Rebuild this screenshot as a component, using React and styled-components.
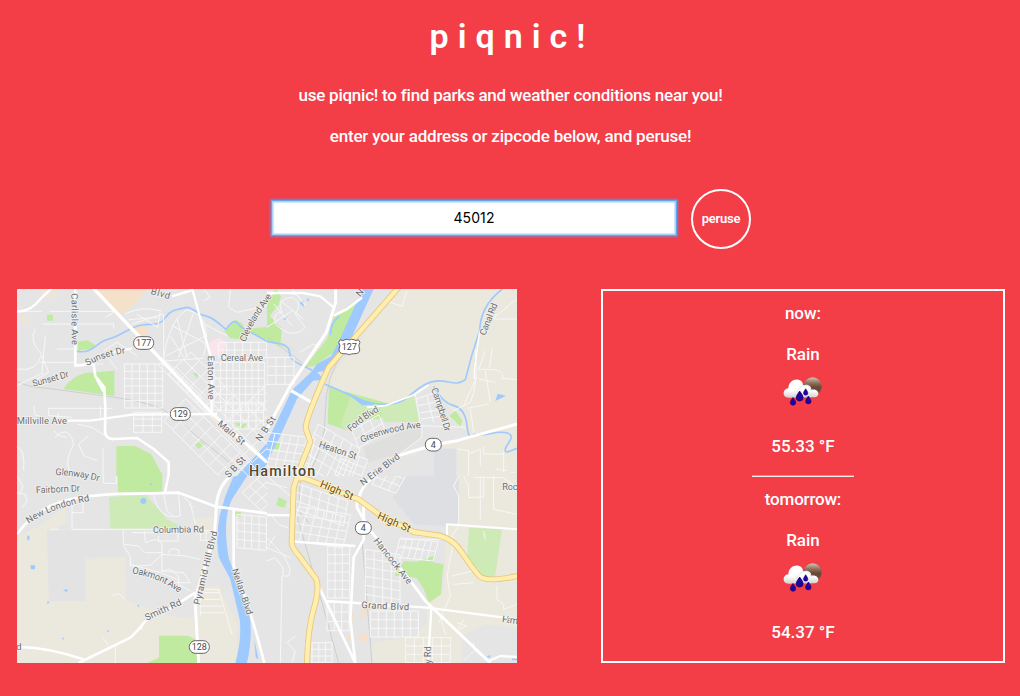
import React from "react";
import styled, { createGlobalStyle } from "styled-components";

const GlobalStyle = createGlobalStyle`
  * { box-sizing: border-box; }
  body {
    margin: 0;
    background: #f33d47;
    color: #fff;
    font-family: Roboto, "Liberation Sans", sans-serif;
  }
`;

const Page = styled.main`
  height: 696px;
  overflow: hidden;
  display: flex;
  flex-direction: column;
`;

const Header = styled.header`
  height: 189px;
  padding-top: 14px;
  display: flex;
  flex-direction: column;
  align-items: center;
`;

const Title = styled.h1`
  margin: 0 0 25px;
  height: 44px;
  font: 600 34px/44px Roboto, "Liberation Sans", sans-serif;
  letter-spacing: 9px;
  padding-left: 4px;
`;

const Text = styled.p`
  margin: 0;
  height: 24px;
  font-size: 17px;
  font-weight: 500;
  line-height: 24px;
  white-space: nowrap;
  letter-spacing: ${(p) => p.$spacing || 0}px;
`;

const Intro = styled(Text)`
  margin-bottom: 17px;
  padding-left: 1px;
`;

const SearchForm = styled.form`
  height: 100px;
  padding-left: 271px;
  display: flex;
  align-items: flex-start;
  gap: 14px;
`;

const AddressInput = styled.input`
  width: 406px;
  height: 36px;
  margin-top: 11px;
  padding: 0 0 2px;
  border: 1px solid #64a5ee;
  outline: 0;
  background: #fff;
  box-shadow: 0 0 2px 1px #8a7fbb, inset 0 0 1px 1.5px #a5cff9;
  color: #000;
  text-align: center;
  font: 400 14px Inter, sans-serif;
  letter-spacing: 0.1px;
`;

const PeruseButton = styled.button`
  width: 60px;
  height: 60px;
  padding: 0 0 1px;
  border: 2px solid #fff;
  border-radius: 50%;
  background: transparent;
  color: #fff;
  font: 600 13px Roboto, sans-serif;
  letter-spacing: -0.2px;
`;

const Results = styled.section`
  display: flex;
  justify-content: space-between;
  padding: 0 15px 0 17px;
`;

const MapFrame = styled.div`
  width: 500px;
  height: 374px;
  overflow: hidden;
  background: #e5e5e5;
  svg { display: block; }
`;

const WeatherPanel = styled.aside`
  width: 404px;
  height: 374px;
  border: 2px solid #fff;
  padding-top: 10px;
  display: flex;
  flex-direction: column;
  align-items: center;
`;

const Forecast = styled.article`
  flex: none;
  height: 186px;
  display: flex;
  flex-direction: column;
  align-items: center;
`;

const When = styled(Text)`
  margin-bottom: 17px;
`;

const IconBox = styled.div`
  height: 50px;
  padding-top: 11px;
  margin-bottom: 18px;
  svg { display: block; }
`;

const Divider = styled.hr`
  width: 102px;
  height: 2px;
  margin: 17px 0 0;
  border: 0;
  border-top: 1px solid #a6a2a4;
  border-bottom: 1px solid #f1eeee;
`;

/* Map drawing units are a third of a pixel; each tile covers 750 by 561 units. */
const tiles = [
  {
    at: [0, 0],
    land: [
      ["#f5e0c9", "M232 0L396 0L345 52L300 85Z M345 118L370 106L392 116L386 140L365 140Z M593 372L606 388L600 396L588 386Z M685 460l14 14l-12 8Z"],
      ["#ede6d8", "M70 0h52v20l-52 8Z M8 75l30 12v22l-26-8Z"],
      ["#fbe4ec", "M577 160L605 146L630 160L618 196L580 200Z"],
      ["#bfeaa0", "M90 77h18v18H90Z M183 158l28-4l24 14l-12 12l-40 5Z M140 300Q160 265 205 252L292 245V321L255 316Z M622 126l34-34l20 12l14 48l-50-4Z M700 118l50-4v42l-52-24Z M526 252h17v18Z M652 402l40 1l-18 20Z M534 467l16-12l13 11l-18 14Z M298 472L352 470L402 495L438 561H298Z"],
    ],
    water: ["M750 462L698 520L660 561H720L750 525Z"],
    streams: ["M180 187C230 195 235 160 275 150S340 112 375 108S430 110 445 86S480 62 510 55C530 55 540 78 570 82C600 90 625 125 628 120S650 85 663 104S700 125 750 158"],
    minor: [
      "M0 67H75M98 67H295L265 85M74 105H290V120M55 120Q35 155 70 190L95 250L50 275M0 240Q60 250 72 200M85 140L75 250M120 180H180M70 220H175M200 225L260 210M325 75Q370 50 430 65L422 115L360 75M335 92L420 85M345 105L438 75",
      "M440 210Q455 95 510 62Q590 80 560 200M448 200L568 140M465 110L570 165M480 88L510 205M530 70L485 205M500 205L460 140M440 216L560 208M560 105L630 140M560 0L580 25L560 35M640 0L635 55L660 70L750 50",
      "M95 358H285M95 358V380L165 385M125 372L120 400M250 350V385M110 425L125 440L150 445M180 405L225 415L265 440M115 445Q155 405 170 465Q140 520 160 548L235 555M215 440L185 465L200 500L240 515M258 478V561M50 350L55 380H68M0 475Q25 480 20 545",
      "M440 75V230M200 225L258 225M260 185L300 160L360 200M275 210L300 240M0 290L80 250"
    ],
    grids: [
      [322, 225, 23, 0, 0, 22, 5, 6], [350, 370, 28, 0, 0, 20, 3, 3], [443, 212, 28, 28, -18, 18, 5, 1],
      [455, 255, 26, 26, 22, -22, 6, 3], [440, 395, 27, 27, 22, -22, 8, 3],
      [591, 220, 19, 0, 0, 24, 8, 6], [625, 345, 23, 0, 0, 25, 5, 3], [605, 160, 24, 0, 0, 23, 6, 2],
      [610, 420, 25, -24, 24, 25, 6, 4]
    ],
    rail: ["M0 278Q35 293 62 295T270 322Q380 335 440 362L750 610"],
    major: [
      ["M220 -12L590 378L750 520", 10], ["M0 67Q40 70 70 30L110 -8", 7], ["M175 0V230L230 225L235 262L262 295L265 360L264 430Q268 452 290 450L360 447L410 480L455 520V561", 8],
      ["M526 0L584 215V375", 7], ["M150 395H220L345 377L600 375", 7], ["M465 22L530 2", 7], ["M290 190L345 178", 6], ["M240 268L262 308", 11]
    ], highways: []
  },
  {
    at: [750, 0],
    land: [
      ["#ebe8dd", "M400 0H750V561H570V478H448V500L410 500L610 440L545 375L500 290L400 350L300 345L180 288L205 245Z"],
      ["#e5e5e5", "M440 320L490 290L530 330L600 440L410 500L350 400H458Z"],
      ["#dedfe3", "M502 480H567V561H502Z"],
      ["#dfdfde", "M290 475L462 405V450L405 493L300 520Z"],
      ["#bfeaa0", "M0 20L28 0L42 22L35 48L8 80L45 120L40 165L90 184L0 158Z M278 24L200 85L180 150L112 235L145 230L200 190L285 30Z M186 294L370 345L340 390H305L240 424L182 404Z M547 380L566 365L586 395L580 412Z M15 465l26-9l-4 24l-20 1Z"],
      ["#ceebb7", "M250 325L220 410L240 424L305 385L345 350Z M338 354L440 319L458 398L350 400Z"],
    ],
    water: ["M288 0L255 70L215 158L192 202L150 225L132 250L75 303L-5 470V530L40 440L90 330L138 275L172 272L150 250L180 245L235 187L320 0Z", "M685 336l7-22l25 6Z M98 42l12-8v20Z M48 90l12-6l-4 10Z M118 32l8-4v10Z M235 308l55 25l35 14l-40 2Z"],
    streams: ["M0 158L45 165Q70 175 68 195T135 243", "M172 285C250 315 295 350 360 346S420 315 475 286S560 300 595 272Q612 200 638 125Q640 50 706 0", "M500 292Q525 340 560 350T600 410T622 436C650 445 690 422 720 432S720 460 715 480S740 480 750 478", "M217 82Q190 100 190 138"],
    minor: [
      "M0 18L52 10L90 18L115 48L75 0M45 70Q25 30 75 25Q110 40 85 75L115 115Q75 155 25 105Q15 70 45 70M98 190L140 165L155 175M20 45L75 110M40 35L110 90M0 115L75 65",
      "M370 40L405 52L420 5M655 185L635 242Q720 235 705 268L750 272M635 270L685 280M655 245L670 340M680 90H750M665 98L750 30M630 262L590 350M668 235L675 180M610 360L620 430M600 358L665 345",
      "M445 315L460 405M480 320L500 400M505 325L535 425M448 330L500 312M452 350L515 338M460 372L525 360M462 390L535 380M462 410L595 415M560 365L610 340Q635 290 625 180M400 493L465 445V410",
      "M570 480L605 485V561M605 495L640 480V530M650 470V495H710M710 485V550M685 540L720 545M745 550L730 550"
    ],
    grids: [[0, 205, 27, 0, 0, 27, 3, 3], [0, 430, 24, 3, -6, 25, 6, 5], [155, 405, 25, 15, -13, 29, 5, 5], [255, 425, 27, -16, 10, 26, 3, 2], [230, 485, 24, 9, -9, 24, 3, 3]],
    rail: ["M0 145L50 180L110 225L160 270M400 0L230 190Q175 260 175 370T120 561"],
    major: [["M206 0V40L178 130L70 290L0 420", 9], ["M0 12H108L160 22L200 55", 7], ["M200 80L240 60L285 25", 8], ["M72 305L138 342", 9], ["M300 355L355 350L440 318L485 288", 5], ["M395 500Q500 465 570 455L750 405", 9], ["M638 125L622 245V270", 4]],
    highways: ["M395 -5L185 235Q115 390 116 418L130 458L100 535"]
  },
  {
    at: [0, 561],
    land: [
      ["#ebe8dd", "M0 185L75 145L110 118L148 95V140L90 168L96 375H203L205 250L326 242V372L465 420L530 426L535 350L550 150L590 123V300L660 440V561H0Z M535 125h55v45l-55 10Z"],
      ["#e3e3e4", "M90 165H326V243H205V375H96Z"],
      ["#e5e5e5", "M320 160H590V123L602 250L606 325L552 340L530 426L465 420L326 372Z"],
      ["#ebe8dd", "M535 125h55v45l-55 10Z"],
      ["#bfeaa0", "M302 0H436V50H303Z M655 108h17v13H655Z M426 479H512L540 492V561H390L426 545Z"],
      ["#ceebb7", "M276 63L385 57L430 105L450 130L490 150L450 158H280Z"],
    ],
    water: ["M650 0L625 60L608 120Q595 200 606 245L640 310L668 430Q675 490 655 561H690Q710 470 695 405Q665 330 635 245Q615 130 645 70L690 0Z", "M370 75a9 9 0 1 1 18 0a9 9 0 1 1-18 0 M30 182l6-4l2 10l-6 7Z M40 268h14v12H42Z M138 343l12-4l2 10Z M90 376l8 1l-6 8Z M268 466l8-4v6Z M135 487l5-3v9Z M360 386h6v9Z M398 25l6-4v8Z M712 490l12 60l-8-6Z"],
    streams: [],
    minor: [
      "M0 50L25 55L30 75L15 95M0 0L18 30L10 55M165 80V160H410M165 110H198V75M100 160H125M260 0V22H298V0M318 162L320 210L340 240V270L400 268L435 235V200L415 190L385 200L382 165M322 205L365 210L382 230M345 170H420M425 180V195H483V170M385 230H435V285L500 290L520 320H475",
      "M435 235L505 240L550 250M455 232Q455 212 485 222V235M340 265L430 290L480 310M410 55Q425 135 490 120L485 55M440 55L450 105L470 120M500 65L520 80L535 145M515 85L530 95M430 285L460 280L485 300V325L520 345M550 350H605V340L552 340M605 340L645 475M550 370H610M550 390H615M550 410H620M550 345V420M285 358L305 353L325 370M258 485L275 510M295 510V561M375 450V462"
    ],
    grids: [[660, 115, 22, 2, 0, 25, 4, 4], [675, 50, 22, -20, 19, 18, 4, 3], [550, 164, 17, 0, 0, 29, 2, 1]], rail: [],
    major: [["M0 175Q50 105 130 78T400 52L485 50L598 92L750 112", 8], ["M455 -5L444 50", 7], ["M640 0Q600 35 598 95L592 180Q545 330 534 370L545 561", 9], ["M650 100V270Q695 380 742 561", 8], ["M535 350L455 400Q390 420 370 455L340 485L185 561", 8], ["M10 513Q95 515 200 550", 7]],
    highways: []
  },
  {
    at: [750, 561],
    land: [
      ["#ebe8dd", "M575 0H750V455L655 445L585 480V561H315V500L440 482L480 440V390L525 350L535 290L535 145L575 140Z"],
      ["#dedfe3", "M405 0H575V140L530 150L440 145L378 65Z"],
      ["#f5e0c9", "M245 410l15 2v25l-20-4Z M285 395l14 3l-2 22l-18 8Z M245 480l8-2l2 16h-12Z M275 472h28v22h-28Z"],
      ["#bfeaa0", "M412 256L450 257L500 239V260L529 264L522 355L485 380L470 338L448 305L405 300H385V288Z M35 64l25 12l-8 20l-25-9Z"],
      ["#ceebb7", "M606 155L705 160L684 305L625 298L600 255Z"],
    ],
    water: ["M658 543l12-7v9Z"], streams: ["M735 550h15"],
    minor: [
      "M0 20L60 35M0 185L50 238L70 280L65 300H48V275L25 245L0 255M0 215L70 245M25 178L5 210M0 0L75 65M10 115L35 145L75 160M45 300L40 561M85 480L60 500L85 525L75 561",
      "M575 0L560 30L575 60V150L555 180V220L540 300L550 360L515 440M590 0L605 30V65L650 62V0M640 0V130M680 0V100L750 115M620 5H710L750 35M650 165L655 190M555 300L635 280M560 325L620 320M520 420L535 475M590 430L575 460L600 450L570 440M690 330V370L710 385V400L750 385M620 525L590 555M620 500V520L650 545M400 190H530M400 210L470 220"
    ],
    grids: [[80, 20, 27, 9, -4, 25, 6, 3], [95, 92, 26, 4, -6, 25, 6, 4], [182, 210, 22, 0, 0, 26, 3, 6], [295, 220, 26, 4, 0, 27, 4, 6], [310, 405, 24, 0, 0, 26, 6, 3], [315, 25, 24, 9, 12, -22, 3, 4], [400, 185, 19, 2, -8, 29, 6, 2], [415, 485, 27, 0, 0, 25, 5, 3], [115, 500, 20, 0, 0, 20, 4, 3], [180, 380, 22, 0, 0, 28, 3, 3]],
    rail: ["M90 120L165 380L215 561M285 190L315 561M100 0L95 105L125 140"],
    major: [["M0 117L75 118", 7], ["M78 197L265 210", 7], ["M275 70Q285 20 330 0", 9], ["M270 70V95L290 130V190L260 245L250 430L265 561", 8], ["M150 320L265 561", 8], ["M175 375L480 395L750 430", 7], ["M290 90V130L315 170Q440 325 475 375L670 561", 9], ["M493 398L483 561", 7], ["M540 192V145L750 160", 6], ["M665 555L700 540L750 543", 7]],
    highways: ["M100 -25L80 35L74 200Q75 215 95 238L148 310Q158 340 140 400T120 570", "M85 8L110 6L275 70L340 118L440 168L510 178Q555 185 585 230T635 298T750 300"]
  }
];

// [text, x1, y1, x2, y2, bendX, bendY]
const labels = [
  ["Blvd", 400, 14, 457, 31], ["Carlisle Ave", 163, 13, 164, 169],
  ["Sunset Dr", 211, 231, 326, 193, 265, 200], ["Sunset Dr", 49, 293, 158, 263, 100, 280],
  ["Millville Ave", -1, 406, 151, 406], ["Glenway Dr", 115, 558, 246, 577, 185, 560],
  ["Cleveland Ave", 686, 160, 766, 22, 707, 98], ["Cereal Ave", 611, 215, 739, 215],
  ["Eaton Ave", 572, 200, 573, 333], ["Main St", 600, 407, 675, 470],
  ["N B St", 730, 459, 778, 389], ["S B St", 635, 568, 688, 512], ["N", 1030, 25, 1045, 6],
  ["Canal Rd", 1405, 141, 1442, 46], ["Campbell Dr", 1242, 301, 1284, 430, 1262, 350],
  ["Ford Blvd", 1001, 429, 1088, 366, 1040, 393], ["Greenwood Ave", 1035, 462, 1213, 416, 1115, 425],
  ["Heaton St", 904, 474, 1016, 512], ["N Erie Blvd", 1038, 591, 1151, 506],
  ["Fairborn Dr", 57, 613, 190, 607], ["New London Rd", 35, 704, 219, 636, 100, 658],
  ["Columbia Rd", 408, 732, 562, 730], ["Pyramid Hill Blvd", 548, 949, 602, 728],
  ["Oakmont Ave", 345, 854, 487, 912, 420, 862], ["Smith Rd", 389, 995, 496, 946],
  ["Neilan Blvd", 644, 842, 690, 980], ["d", -2, 1082, 12, 1082],
  ["Rock", 1456, 604, 1516, 604], ["Hancock Ave", 1069, 756, 1173, 888],
  ["Grand Blvd", 1033, 957, 1177, 964], ["Ham", 1454, 999, 1503, 1006], ["y Rd", 1241, 1124, 1241, 1071]
];
const streetLabels = [["High St", 907, 593, 1005, 634], ["High St", 1079, 688, 1177, 731]];

const MapText = styled.text`
  font: ${(p) => p.$weight || 400} ${(p) => p.$size || 28}px Roboto, sans-serif;
  fill: ${(p) => p.$color || "#6d6d6d"};
  stroke: ${(p) => p.$halo || "#f2f2f2"};
  stroke-width: 5px;
  stroke-linejoin: round;
  paint-order: stroke;
`;

function gridPath([x, y, ux, uy, vx, vy, nu, nv]) {
  let d = "";
  for (let i = 0; i <= nu; i++) d += `M${x + ux * i} ${y + uy * i}l${vx * nv} ${vy * nv}`;
  for (let j = 0; j <= nv; j++) d += `M${x + vx * j} ${y + vy * j}l${ux * nu} ${uy * nu}`;
  return d;
}

function PathLabel({ id, data, ...rest }) {
  const [text, x1, y1, x2, y2, bx = (x1 + x2) / 2, by = (y1 + y2) / 2] = data;
  const chord = Math.hypot(x2 - x1, y2 - y1);
  const via = Math.hypot(bx - x1, by - y1) + Math.hypot(x2 - bx, y2 - by);
  const length = (2 * chord + via) / 3 - 1;
  return (
    <>
      <path id={id} d={`M${x1} ${y1}Q${bx} ${by} ${x2} ${y2}`} fill="none" />
      <MapText {...rest}>
        <textPath href={`#${id}`} textLength={length}>{text}</textPath>
      </MapText>
    </>
  );
}

function RouteShield({ x, y, label, us }) {
  const half = label.length > 1 ? 30 : 24;
  return (
    <g transform={`translate(${x} ${y})`}>
      {us ? (
        <path d="M-27 -22Q-20 -16 -13 -22Q-6 -25 0 -21Q7 -25 14 -22Q21 -16 27 -22L32 -14Q25 -5 31 6Q32 20 17 20Q6 20 0 23Q-6 20 -17 20Q-32 20 -31 6Q-25 -5 -32 -14Z" fill="#fff" stroke="#666" strokeWidth="3" />
      ) : (
        <rect x={-half} y="-19" width={half * 2} height="38" rx="18" fill="#fff" stroke="#666" strokeWidth="3" />
      )}
      <MapText $color="#484848" $halo="#fff" $size={27} textAnchor="middle" y="10">{label}</MapText>
    </g>
  );
}

function CityMap() {
  const layer = (draw) => tiles.map((t, i) => (
    <g key={i} transform={`translate(${t.at.join(" ")})`} clipPath="url(#tile)">{draw(t)}</g>
  ));
  return (
    <svg width="500" height="374" viewBox="0 0 1500 1122" fill="none" strokeLinejoin="round">
      <defs><clipPath id="tile"><rect width="751" height="562" /></clipPath></defs>
      {layer((t) => t.land.map(([fill, d], i) => <path key={i} d={d} fill={fill} />))}
      {layer((t) => <path d={t.rail.join("")} stroke="#cecece" strokeWidth="3" />)}
      {layer((t) => <>
        <path d={t.water.join("")} fill="#9ecaff" />
        <path d={t.streams.join("")} stroke="#9ecaff" strokeWidth="5" />
      </>)}
      {layer((t) => <path d={t.minor.join("") + t.grids.map(gridPath).join("")} stroke="#f7f7f7" strokeWidth="3" />)}
      {layer((t) => t.major.map(([d, w], i) => <path key={i} d={d} stroke="#fff" strokeWidth={w} />))}
      {layer((t) => <>
        <path d={t.highways.join("")} stroke="#e5c77c" strokeWidth="18" />
        <path d={t.highways.join("")} stroke="#ffeeae" strokeWidth="13" />
      </>)}
      {labels.map((l, i) => <PathLabel key={i} id={`street-${i}`} data={l} />)}
      {streetLabels.map((l, i) => <PathLabel key={i} id={`high-${i}`} data={l} $color="#6f5020" $halo="#fff3c5" $size={32} />)}
      <RouteShield x={380} y={162} label="177" />
      <RouteShield x={490} y={375} label="129" />
      <RouteShield x={997} y={174} label="127" us />
      <RouteShield x={1249} y={467} label="4" />
      <RouteShield x={1039} y={717} label="4" />
      <RouteShield x={547} y={1074} label="128" />
      <MapText x="696" y="560" $size={43} $weight={500} $color="#54462a" $halo="#f8f8f8" textLength="199">Hamilton</MapText>
    </svg>
  );
}

function RainIcon({ id }) {
  const drop = "M0 -12Q9 0 9 5A9 9 0 0 1 -9 5Q-9 0 0 -12Z";
  return (
    <svg width="40" height="30" viewBox="20 18 120 90">
      <defs>
        <linearGradient id={`moon-${id}`} x2="0" y2="1"><stop offset="0" stopColor="#d5c4b6" /><stop offset=".3" stopColor="#93745f" /><stop offset=".55" stopColor="#694834" /><stop offset="1" stopColor="#7b503c" /></linearGradient>
        <linearGradient id={`cloud-${id}`} gradientUnits="userSpaceOnUse" x1="0" y1="28" x2="0" y2="84"><stop offset=".55" stopColor="#fff" /><stop offset="1" stopColor="#c8c5c5" /></linearGradient>
      </defs>
      <circle cx="109" cy="46" r="27" fill={`url(#moon-${id})`} />
      <path d="M36 80C17 80 17 54 36 52C37 18 80 18 80 43C96 37 105 46 105 56C128 50 134 78 114 79Z" fill={`url(#cloud-${id})`} />
      <path d="M61 65Q70 43 86 43T104 59" fill="none" stroke="#d7d6d6" strokeWidth="2" />
      {[[50, 90, 0.9], [70, 74, 1.15], [88, 62, 0.75], [96, 86, 0.9]].map(([x, y, s]) => (
        <path key={x} d={drop} transform={`translate(${x} ${y}) scale(${s})`} fill="#2500a8" stroke="#110064" strokeWidth="2" />
      ))}
    </svg>
  );
}

const days = [
  { when: "now:", sky: "Rain", temp: "55.33 °F" },
  { when: "tomorrow:", sky: "Rain", temp: "54.37 °F" }
];

export default function App() {
  return (
    <Page>
      <GlobalStyle />
      <Header>
        <Title>piqnic!</Title>
        <Intro $spacing={-0.23}>use piqnic! to find parks and weather conditions near you!</Intro>
        <Intro $spacing={-0.2}>enter your address or zipcode below, and peruse!</Intro>
      </Header>
      <SearchForm onSubmit={(e) => e.preventDefault()}>
        <AddressInput defaultValue="45012" aria-label="Address or zipcode" />
        <PeruseButton>peruse</PeruseButton>
      </SearchForm>
      <Results>
        <MapFrame><CityMap /></MapFrame>
        <WeatherPanel>
          {days.map((day, i) => (
            <Forecast key={day.when}>
              <When $spacing={i ? -0.2 : 0}>{day.when}</When>
              <Text>{day.sky}</Text>
              <IconBox><RainIcon id={i} /></IconBox>
              <Text>{day.temp}</Text>
              {i === 0 && <Divider />}
            </Forecast>
          ))}
        </WeatherPanel>
      </Results>
    </Page>
  );
}
